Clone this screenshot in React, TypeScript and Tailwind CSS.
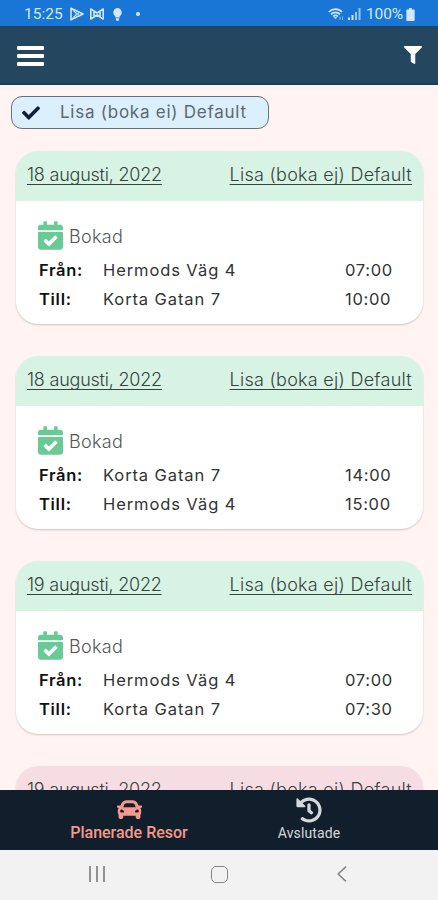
import { FaCalendarCheck, FaCar, FaCheck, FaFilter, FaHistory } from 'react-icons/fa'

type Trip = {
  date: string
  name: string
  cancelled?: boolean
  stops?: { label: string; place: string; time: string }[]
}

const trips: Trip[] = [
  {
    date: '18 augusti, 2022',
    name: 'Lisa (boka ej) Default',
    stops: [
      { label: 'Från:', place: 'Hermods Väg 4', time: '07:00' },
      { label: 'Till:', place: 'Korta Gatan 7', time: '10:00' },
    ],
  },
  {
    date: '18 augusti, 2022',
    name: 'Lisa (boka ej) Default',
    stops: [
      { label: 'Från:', place: 'Korta Gatan 7', time: '14:00' },
      { label: 'Till:', place: 'Hermods Väg 4', time: '15:00' },
    ],
  },
  {
    date: '19 augusti, 2022',
    name: 'Lisa (boka ej) Default',
    stops: [
      { label: 'Från:', place: 'Hermods Väg 4', time: '07:00' },
      { label: 'Till:', place: 'Korta Gatan 7', time: '07:30' },
    ],
  },
  {
    date: '19 augusti, 2022',
    name: 'Lisa (boka ej) Default',
    cancelled: true,
  },
]

function StatusBar() {
  return (
    <div className="flex h-[26px] shrink-0 items-center bg-[#1976d6] pt-0.5 pl-[24px] pr-[23px] font-[Roboto] text-[#d3e8fc]">
      <span className="w-[39px] text-[15.5px] leading-4">15:25</span>
      {/* Notification icons */}
      <svg className="ml-[7px] size-[14px]" viewBox="0 0 14 14" fill="none" stroke="currentColor" strokeWidth="1.6" strokeLinejoin="round">
        <path d="M1 1.2 13 7 1 12.8Z" />
        <path d="m1 1.2 5.5 5.8L1 12.8M4 4l5.5 4.6M4 10l5.5-4.6" strokeWidth="1" />
      </svg>
      <svg className="ml-[6px] h-[12px] w-[14px]" viewBox="0 0 14 12" fill="none" stroke="currentColor" strokeWidth="1.6" strokeLinejoin="round">
        <path d="M.8 1 7 5l6.200-4v10L7 7 .8 11ZM4 3v6M10 3v6" />
      </svg>
      <svg className="ml-[9px] h-[13px] w-[9px]" viewBox="0 0 9 13" fill="currentColor">
        <path d="M4.500 0a4.500 4.500 0 0 1 2.200 8.200v1.300H2.300V8.200A4.500 4.500 0 0 1 4.500 0ZM2.800 10.300h3.400v1L5.300 13H3.700l-.9-1.700Z" />
      </svg>
      <span className="ml-[14px] size-[4px] rounded-full bg-current" />

      <div className="ml-auto flex items-center">
        <svg className="h-[13px] w-[16px]" viewBox="0 0 16 13" fill="none" stroke="currentColor" strokeWidth="1.7">
          <path d="M.8 4C4.500.2 10.500.2 14 4M3 6.300c2.600-2.600 6.500-2.600 9 0M5.200 8.500c1.500-1.300 3.200-1.300 4.700 0" />
          <path d="m5.800 9.300 1.700 2 1.700-2Z" fill="currentColor" stroke="none" />
          <path d="M12 8.500V12m2.500-3.500V12" strokeWidth="1" opacity=".6" />
        </svg>
        <svg className="ml-[4px] h-[12px] w-[13px]" viewBox="0 0 13 12" fill="currentColor">
          <path d="M0 9.500h2V12H0zM3.500 7h2v5h-2z" />
          <path d="M7 4h2v8H7zM10.500 0h2v12h-2z" opacity=".7" />
        </svg>
        <span className="ml-[5px] w-[38px] text-[15.5px] leading-4 tracking-[-0.1px]">100%</span>
        <svg className="ml-[2px] h-[13px] w-[9px]" viewBox="0 0 9 14" fill="currentColor">
          <path d="M3 0h3v1.500h2A1 1 0 0 1 9 2.500V13a1 1 0 0 1-1 1H1a1 1 0 0 1-1-1V2.500a1 1 0 0 1 1-1h2Z" />
        </svg>
      </div>
    </div>
  )
}

function Header() {
  return (
    <header className="flex h-[59px] shrink-0 items-center justify-between border-b-2 border-[#173f5c] bg-[#25465f] pl-[17px] pr-[16px] text-white">
      <button className="flex w-[27px] flex-col gap-[4px] pt-0.5" aria-label="Meny">
        <span className="h-[4px] w-full rounded-[1px] bg-white" />
        <span className="h-[4px] w-full rounded-[1px] bg-white" />
        <span className="h-[4px] w-full rounded-[1px] bg-white" />
      </button>
      <button aria-label="Filter">
        <FaFilter className="size-[18px]" />
      </button>
    </header>
  )
}

function TripCard({ trip }: { trip: Trip }) {
  return (
    <article className="h-[173px] shrink-0 overflow-hidden rounded-[22px] bg-white shadow-[0_1px_2px_rgba(0,0,0,0.2)]">
      <div
        className={`flex h-[50px] items-center justify-between pb-[4px] pl-[11px] pr-[11px] text-[18px] font-light text-[#35443e] underline decoration-1 underline-offset-[3px] [text-decoration-skip-ink:none] ${
          trip.cancelled ? 'bg-[#f5dde3]' : 'bg-[#d7f3e4]'
        }`}
      >
        <span className="tracking-[-0.22px]">{trip.date}</span>
        <span className="tracking-[0.27px]">{trip.name}</span>
      </div>
      {trip.stops && (
        <div className="pl-[22px] pt-[20px]">
          <div className="flex h-[35px] items-start gap-[6px]">
            <FaCalendarCheck className="h-[29px] w-[25px] text-[#68cb96]" />
            <span className="pt-[2px] text-[18px] leading-[27px] font-light tracking-[0.3px] text-[#555]">Bokad</span>
          </div>
          <dl className="pl-px text-[16.5px] leading-[29px] text-[#333]">
            {trip.stops.map((stop) => (
              <div key={stop.label} className="grid grid-cols-[64px_242px_1fr]">
                <dt className="font-semibold tracking-[0.7px] text-[#111]">{stop.label}</dt>
                <dd className="tracking-[0.9px]">{stop.place}</dd>
                <dd className="tracking-[0.7px]">{stop.time}</dd>
              </div>
            ))}
          </dl>
        </div>
      )}
    </article>
  )
}

function TabBar() {
  return (
    <nav className="flex h-[60px] shrink-0 bg-[#101f2b] pl-[39px] pt-[7px] font-[Roboto]">
      <button className="flex w-[180px] flex-col items-center text-[#f6998c]">
        <FaCar className="h-[25px] w-[25px]" />
        <span className="mt-px text-[16px] font-medium leading-[20px]">Planerade Resor</span>
      </button>
      <button className="flex w-[180px] flex-col items-center text-[#d5d8db]">
        <FaHistory className="size-[26px]" />
        <span className="text-[14px] leading-[20px] tracking-[0.1px]">Avslutade</span>
      </button>
    </nav>
  )
}

function SystemNav() {
  return (
    <div className="flex h-[50px] shrink-0 items-center bg-[#f2f2f2] pb-[2px] pl-[36px] text-[#888]">
      <div className="flex w-[122px] justify-center">
        <svg className="h-[16px] w-[16px]" viewBox="0 0 16 16" stroke="currentColor" strokeWidth="1.800">
          <path d="M1 0v16M8 0v16M15 0v16" />
        </svg>
      </div>
      <div className="flex w-[122px] justify-center">
        <span className="size-[17px] rounded-[5px] border-[1.5px] border-current" />
      </div>
      <div className="flex w-[122px] justify-center pl-[2px]">
        <svg className="h-[16px] w-[10px]" viewBox="0 0 10 16" fill="none" stroke="currentColor" strokeWidth="1.600">
          <path d="M9 .7 1.200 8 9 15.300" />
        </svg>
      </div>
    </div>
  )
}

export default function App() {
  return (
    <div className="flex h-[900px] w-[438px] flex-col overflow-hidden bg-[#fff4f2] font-[Inter,sans-serif]">
      <StatusBar />
      <Header />
      <main className="flex min-h-0 flex-1 flex-col overflow-hidden pt-[11px]">
        <div className="ml-[11px] flex h-[33px] w-[258px] shrink-0 items-center rounded-[11px] border border-[#65727c] bg-[#dceffc] pl-[10px]">
          <FaCheck className="size-[18px] text-[#101e39]" />
          <span className="ml-[20px] text-[17px] tracking-[0.75px] text-[#5b6872]">Lisa (boka ei) Default</span>
        </div>
        <div className="mt-[22px] flex flex-col gap-[32px] pl-[16px] pr-[15px]">
          {trips.map((trip, i) => (
            <TripCard key={i} trip={trip} />
          ))}
        </div>
      </main>
      <TabBar />
      <SystemNav />
    </div>
  )
}
